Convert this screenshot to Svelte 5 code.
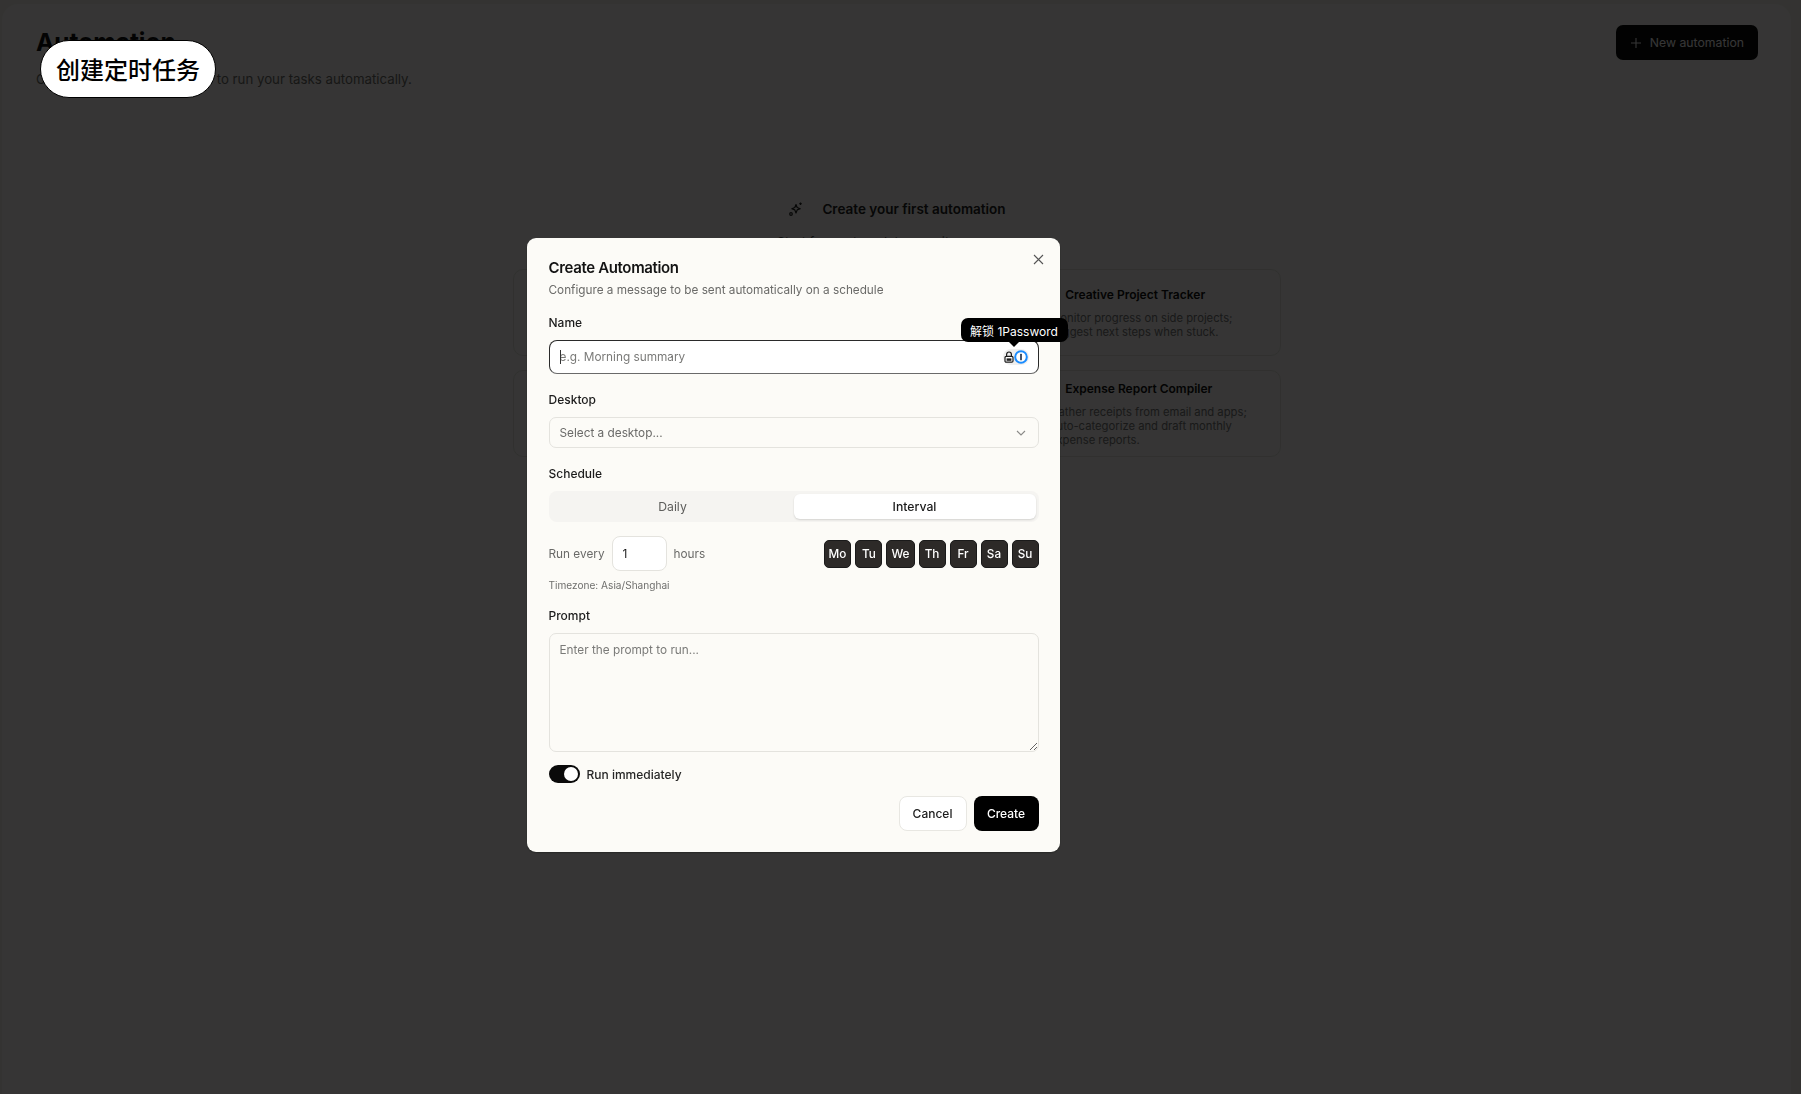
<script>
  const days = ['Mo', 'Tu', 'We', 'Th', 'Fr', 'Sa', 'Su'];

  // only the right column peeks out from behind the modal
  const templates = [
    {},
    {},
    { title: 'Creative Project Tracker', desc: 'Monitor progress on side projects; suggest next steps when stuck.', dot: '#c9793a' },
    {},
    {},
    { title: 'Expense Report Compiler', desc: 'Gather receipts from email and apps; auto-categorize and draft monthly expense reports.', dot: '#3f7a4f' }
  ];

  let mode = 'Interval';
  let immediately = true;
</script>

<main class="page">
  <header class="top">
    <div>
      <h1>Automation</h1>
      <p>Create periodic automations to run your tasks automatically.</p>
    </div>
    <button class="new-btn">
      <svg width="12" height="12" viewBox="0 0 12 12" fill="none" stroke="currentColor" stroke-width="1.1"><path d="M6 1v10M1 6h10" /></svg>
      New automation
    </button>
  </header>

  <section class="empty">
    <div class="empty-head">
      <svg width="16" height="16" viewBox="0 0 16 16" fill="none" stroke="currentColor" stroke-width="1.2" stroke-linejoin="round">
        <path d="M8 3.5l1.2 3 3 1.2-3 1.2L8 12l-1.2-3.1-3-1.2 3-1.2z" />
        <path d="M12.5 1.5v2.4M11.3 2.7h2.4" />
        <circle cx="3" cy="13" r="1.3" />
      </svg>
      <h2>Create your first automation</h2>
    </div>
    <p class="empty-sub">Start from a template or write your own</p>
    <div class="cards">
      {#each templates as t}
        <article class="card">
          {#if t.title}
            <h3><i style="background:{t.dot}"></i>{t.title}</h3>
            <p>{t.desc}</p>
          {/if}
        </article>
      {/each}
    </div>
  </section>
</main>

<div class="pill">创建定时任务</div>

<div class="overlay">
  <div class="modal">
    <button class="close" aria-label="Close">
      <svg width="11" height="11" viewBox="0 0 11 11" fill="none" stroke="currentColor" stroke-width="1.1"><path d="M1 1l9 9M10 1l-9 9" /></svg>
    </button>
    <h2 class="title">Create Automation</h2>
    <p class="sub">Configure a message to be sent automatically on a schedule</p>

    <label class="label l-name" for="name">Name</label>
    <div class="name-wrap">
      <input id="name" class="field name" placeholder="e.g. Morning summary" />
      <span class="caret"></span>
      <div class="op-badge">
        <svg width="10" height="12" viewBox="0 0 10 12">
          <path d="M2.6 5.5V3.4a2.4 2.4 0 0 1 4.8 0v2.1" fill="none" stroke="#1c1c1c" stroke-width="1.2" />
          <rect x="1" y="5.4" width="8" height="5.8" rx="1.2" fill="#fff" stroke="#1c1c1c" stroke-width="1.2" />
          <rect x="2.6" y="7.4" width="4.8" height="2.4" fill="#1c1c1c" />
        </svg>
        <svg width="14" height="14" viewBox="0 0 14 14">
          <circle cx="7" cy="7" r="5.8" fill="#fff" stroke="#1a8cff" stroke-width="2" />
          <rect x="6.2" y="3.8" width="1.6" height="6.4" rx=".5" fill="#1a2b45" />
        </svg>
      </div>
      <div class="op-tip">解锁 1Password</div>
    </div>

    <div class="label l-desktop">Desktop</div>
    <div class="field select">
      <span>Select a desktop...</span>
      <svg width="10" height="6" viewBox="0 0 10 6" fill="none" stroke="#8a8a88" stroke-width="1.1"><path d="M1 1l4 4 4-4" /></svg>
    </div>

    <div class="label l-schedule">Schedule</div>
    <div class="segment">
      {#each ['Daily', 'Interval'] as m}
        <button class:active={mode === m} on:click={() => (mode = m)}>{m}</button>
      {/each}
    </div>

    <div class="interval">
      <span>Run every</span>
      <input class="hours" value="1" />
      <span>hours</span>
      <div class="days">
        {#each days as d}
          <button class="day">{d}</button>
        {/each}
      </div>
    </div>
    <p class="tz">Timezone: Asia/Shanghai</p>

    <label class="label l-prompt" for="prompt">Prompt</label>
    <textarea id="prompt" class="prompt" placeholder="Enter the prompt to run..."></textarea>

    <div class="run">
      <button class="switch" class:on={immediately} aria-label="Run immediately" on:click={() => (immediately = !immediately)}><span></span></button>
      <span>Run immediately</span>
    </div>

    <div class="actions">
      <button class="cancel">Cancel</button>
      <button class="create">Create</button>
    </div>
  </div>
</div>

<style>
  :global(body) {
    background: #f3f1ea;
    font-family: Inter, 'Noto Sans CJK SC', sans-serif;
  }

  button {
    font-family: inherit;
    cursor: pointer;
  }

  .page {
    box-sizing: border-box;
    height: 1090px;
    margin: 4px 10px 0 2px;
    padding: 24px 33px 0 34px;
    background: #fcfbf7;
    border-radius: 16px 16px 0 0;
  }

  .top {
    display: flex;
    justify-content: space-between;
    align-items: flex-start;
  }

  h1 {
    margin: 0;
    font-size: 24.5px;
    line-height: 29px;
    font-weight: 700;
    color: #111;
  }

  .top p {
    margin: 13px 0 0;
    font-size: 13.25px;
    line-height: 18px;
    color: #6f6e6b;
  }

  .new-btn {
    display: flex;
    align-items: center;
    gap: 8px;
    height: 35px;
    margin-top: -3px;
    padding: 0 14px;
    border: 0;
    border-radius: 7px;
    background: #0a0a0a;
    color: #fff;
    font-size: 12.25px;
  }

  .empty {
    width: 769px;
    margin: 111px auto 0;
  }

  .empty-head {
    display: flex;
    justify-content: center;
    align-items: center;
    gap: 18px;
    height: 20px;
    color: #222;
  }

  .empty-head h2 {
    margin: 0;
    font-size: 13.5px;
    font-weight: 600;
  }

  .empty-sub {
    margin: 14px 0 0;
    text-align: center;
    font-size: 13px;
    line-height: 18px;
    color: #555;
  }

  .cards {
    display: grid;
    grid-template-columns: repeat(3, 1fr);
    grid-auto-rows: 87px;
    gap: 14px 12px;
    margin-top: 18px;
  }

  .card {
    box-sizing: border-box;
    display: flex;
    flex-direction: column;
    justify-content: center;
    padding: 0 16px;
    border: 1px solid #e6e4de;
    border-radius: 10px;
  }

  .card h3 {
    display: flex;
    align-items: center;
    gap: 5px;
    margin: 0;
    font-size: 12px;
    line-height: 18px;
    font-weight: 600;
    color: #111;
  }

  .card h3 i {
    width: 10px;
    height: 10px;
    border-radius: 50%;
  }

  .card p {
    margin: 7px 0 0;
    font-size: 11.25px;
    line-height: 14px;
    color: #777;
  }

  .pill {
    position: absolute;
    left: 40px;
    top: 40px;
    box-sizing: border-box;
    width: 176px;
    height: 58px;
    padding-bottom: 2px;
    display: flex;
    align-items: center;
    justify-content: center;
    background: #fff;
    border: 1px solid #000;
    border-radius: 29px;
    font-family: 'Noto Sans CJK SC', sans-serif;
    font-size: 24px;
    font-weight: 500;
    color: #000;
    z-index: 5;
  }

  .overlay {
    position: fixed;
    inset: 0;
    display: flex;
    align-items: flex-start;
    justify-content: flex-start;
    padding: 238px 0 0 527px;
    box-sizing: border-box;
    background: rgba(0, 0, 0, 0.79);
  }

  .modal {
    position: relative;
    box-sizing: border-box;
    width: 533px;
    height: 614px;
    padding: 21px 21.5px 0;
    background: #fcfbf7;
    border-radius: 9px;
    color: #1a1a1a;
    box-shadow: 0 1px 2px rgba(0, 0, 0, 0.3);
  }

  .close {
    position: absolute;
    top: 15px;
    right: 16px;
    width: 12px;
    height: 12px;
    padding: 0;
    display: flex;
    align-items: center;
    justify-content: center;
    border: 0;
    background: none;
    color: #555;
  }

  .title {
    margin: 0;
    font-size: 15px;
    line-height: 18px;
    font-weight: 600;
    letter-spacing: -0.35px;
    color: #141414;
  }

  .sub {
    margin: 4px 0 0;
    font-size: 11.75px;
    line-height: 18px;
    color: #6a6a68;
  }

  .label {
    display: block;
    font-size: 12px;
    line-height: 16px;
    font-weight: 500;
    color: #1c1c1c;
  }

  .l-name { margin-top: 16px; }
  .l-desktop { margin-top: 18px; }
  .l-schedule { margin-top: 18px; }
  .l-prompt { margin-top: 16px; }

  .field {
    box-sizing: border-box;
    width: 100%;
    font-family: inherit;
    font-size: 11.8px;
  }

  .name-wrap {
    position: relative;
    margin-top: 9px;
  }

  .name {
    display: block;
    height: 34px;
    padding: 0 10px;
    background: #fff;
    border: 1.5px solid #2a2a2a;
    border-bottom-color: #6a6a6a;
    border-radius: 8px;
    outline: none;
  }

  ::placeholder {
    color: #7a7a78;
    opacity: 1;
  }

  .caret {
    position: absolute;
    left: 11px;
    top: 10px;
    width: 1px;
    height: 14px;
    background: #333;
  }

  .op-badge {
    position: absolute;
    top: 9px;
    right: 10px;
    box-sizing: border-box;
    width: 26px;
    height: 16px;
    display: flex;
    align-items: center;
    justify-content: center;
    gap: 0;
    background: #efefef;
    border-radius: 8px;
  }

  .op-tip {
    position: absolute;
    top: -22px;
    left: 412px;
    width: 107px;
    height: 24px;
    display: flex;
    align-items: center;
    justify-content: center;
    background: #000;
    border-radius: 7px;
    color: #fff;
    font-size: 12px;
    z-index: 2;
  }

  .op-tip::after {
    content: '';
    position: absolute;
    left: 47px;
    bottom: -5px;
    border-left: 6px solid transparent;
    border-right: 6px solid transparent;
    border-top: 6px solid #000;
  }

  .select {
    display: flex;
    align-items: center;
    justify-content: space-between;
    height: 31px;
    margin-top: 9px;
    padding: 0 11.5px 0 10px;
    border: 1px solid #e4e3de;
    border-radius: 7px;
    color: #6a6a68;
  }

  .segment {
    display: grid;
    grid-template-columns: 1fr 1fr;
    height: 31px;
    margin-top: 9px;
    padding: 3px;
    box-sizing: border-box;
    background: #f5f4f1;
    border-radius: 8px;
  }

  .segment button {
    border: 0;
    padding: 0;
    background: none;
    font-size: 12.25px;
    color: #5e5e5c;
    border-radius: 6px;
  }

  .segment button.active {
    background: #fff;
    color: #1a1a1a;
    font-weight: 500;
    box-shadow: 0 1px 2px rgba(0, 0, 0, 0.14);
  }

  .interval {
    display: flex;
    align-items: center;
    gap: 7px;
    margin-top: 14px;
    font-size: 11.8px;
    color: #6a6a68;
  }

  .hours {
    box-sizing: border-box;
    width: 55px;
    height: 35px;
    padding: 0 10px;
    background: #fff;
    border: 1px solid #e4e3de;
    border-radius: 8px;
    font-family: inherit;
    font-size: 11.8px;
    color: #1a1a1a;
    outline: none;
  }

  .days {
    display: flex;
    gap: 4px;
    margin-left: auto;
  }

  .day {
    box-sizing: border-box;
    min-width: 27px;
    height: 28px;
    padding: 0 4px;
    border: 1px solid #1a1a1a;
    border-radius: 5px;
    background: #2d2a28;
    color: #fff;
    font-size: 11.75px;
    font-weight: 500;
  }

  .tz {
    margin: 7px 0 0;
    font-size: 10.1px;
    line-height: 14px;
    color: #6f6f6d;
  }

  .prompt {
    display: block;
    box-sizing: border-box;
    width: 100%;
    height: 119px;
    margin-top: 9px;
    padding: 8px 10px;
    background: #fcfbf7;
    border: 1px solid #e4e3de;
    border-radius: 7px;
    font-family: inherit;
    font-size: 11.8px;
    line-height: 16px;
    outline: none;
  }

  .run {
    display: flex;
    align-items: center;
    gap: 7px;
    margin-top: 13px;
    font-size: 12px;
    font-weight: 500;
    color: #262626;
  }

  .switch {
    position: relative;
    width: 31px;
    height: 18px;
    padding: 0;
    border: 0;
    border-radius: 9px;
    background: #c9c9c6;
  }

  .switch.on {
    background: #0a0a0a;
  }

  .switch span {
    position: absolute;
    top: 2px;
    left: 2px;
    width: 14px;
    height: 14px;
    border-radius: 50%;
    background: #fff;
  }

  .switch.on span {
    left: 15px;
  }

  .actions {
    display: flex;
    justify-content: flex-end;
    gap: 7px;
    margin-top: 13px;
  }

  .actions button {
    height: 35px;
    border-radius: 8px;
    font-size: 12px;
    font-weight: 500;
  }

  .cancel {
    width: 68px;
    background: #fff;
    border: 1px solid #e8e7e2;
    color: #1a1a1a;
  }

  .create {
    width: 65px;
    background: #000;
    border: 0;
    color: #fff;
  }
</style>
